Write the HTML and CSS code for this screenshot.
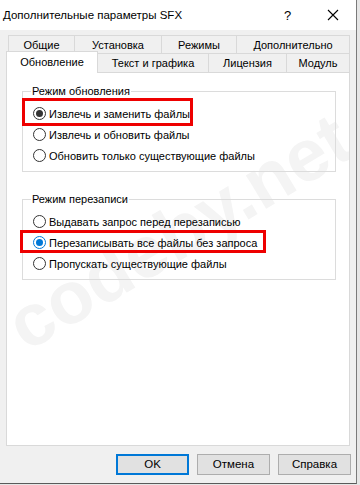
FILE: index.html
```html
<!DOCTYPE html>
<html lang="ru">

<head>
  <meta charset="UTF-8">
  <title>Дополнительные параметры SFX</title>
  <link rel="stylesheet" href="styles.css">
</head>

<body>
  <div class="window">
    <div class="titlebar">
      <span class="title">Дополнительные параметры SFX</span>
      <span class="help">?</span>
      <span class="close">
        <svg width="12" height="12" viewBox="0 0 12 12">
          <path d="M1 1 L11 11 M11 1 L1 11" stroke="#000" stroke-width="1.1" fill="none" />
        </svg>
      </span>
    </div>

    <div class="dialog">
      <div class="tabs">
        <div class="tab-row">
          <div class="tab tab-general">Общие</div>
          <div class="tab tab-install">Установка</div>
          <div class="tab tab-modes">Режимы</div>
          <div class="tab tab-extra">Дополнительно</div>
        </div>
        <div class="tab-row">
          <div class="tab tab-update active">Обновление</div>
          <div class="tab tab-text">Текст и графика</div>
          <div class="tab tab-license">Лицензия</div>
          <div class="tab tab-module">Модуль</div>
        </div>
      </div>

      <div class="panel">
        <div class="watermark">codeby.net</div>

        <fieldset class="group">
          <legend>Режим обновления</legend>
          <label class="option">
            <span class="radio checked"></span>Извлечь и заменить файлы
            <span class="mark mark-update"></span>
          </label>
          <label class="option"><span class="radio"></span>Извлечь и обновить файлы</label>
          <label class="option"><span class="radio"></span>Обновить только существующие файлы</label>
        </fieldset>

        <fieldset class="group group-overwrite">
          <legend>Режим перезаписи</legend>
          <label class="option"><span class="radio"></span>Выдавать запрос перед перезаписью</label>
          <label class="option">
            <span class="radio checked focused"></span>Перезаписывать все файлы без запроса
            <span class="mark mark-overwrite"></span>
          </label>
          <label class="option"><span class="radio"></span>Пропускать существующие файлы</label>
        </fieldset>
      </div>

      <div class="buttons">
        <button class="btn default">OK</button>
        <button class="btn">Отмена</button>
        <button class="btn">Справка</button>
      </div>
    </div>
  </div>
</body>

</html>
```

FILE: styles.css
```css
* {
  margin: 0;
  padding: 0;
  box-sizing: border-box;
}

body {
  font-family: "Liberation Sans", Arial, sans-serif;
  font-size: 11px;
  color: #000000;
  background: #e6e6e6;
}

.window {
  width: 357px;
  height: 484px;
  background: #f0f0f0;
  border-right: 1px solid #7a7a7a;
  border-bottom: 1px solid #5a5a5a;
}

.titlebar {
  height: 30px;
  background: #ffffff;
  display: flex;
  align-items: center;
  padding-left: 3px;
  font-size: 11.5px;
}

.title {
  flex: 1;
}

.help {
  width: 14px;
  font-size: 13px;
  margin-right: 29px;
}

.close {
  width: 12px;
  height: 12px;
  margin-right: 17px;
  display: flex;
}

.dialog {
  padding: 5px 6px 0 6px;
}

/* tabs */
.tab-row {
  display: flex;
  margin-left: 2px;
}

.tab {
  height: 18px;
  line-height: 19px;
  text-align: center;
  background: #f0f0f0;
  border-top: 1px solid #d9d9d9;
  border-right: 1px solid #d9d9d9;
  white-space: nowrap;
}

.tab:first-child {
  border-left: 1px solid #d9d9d9;
}

.tab-row + .tab-row .tab {
  height: 19px;
  line-height: 19px;
}

.tab-general { width: 67px; }
.tab-install { width: 87px; }
.tab-modes { width: 75px; }
.tab-extra { width: 113px; }
.tab-text { width: 111px; }
.tab-license { width: 78px; }
.tab-module { width: 63px; }

.tab-row + .tab-row .tab.active {
  width: 92px;
  height: 22px;
  margin: -2px 0 -1px -2px;
  line-height: 21px;
  background: #ffffff;
  position: relative;
  z-index: 2;
}

/* page */
.panel {
  height: 374px;
  background: #ffffff;
  border: 1px solid #d9d9d9;
  padding: 10px 13px 0 15px;
  position: relative;
  overflow: hidden;
}

.watermark {
  position: absolute;
  left: -28px;
  top: 122px;
  width: 400px;
  text-align: center;
  font-family: "Liberation Sans", sans-serif;
  font-weight: bold;
  font-size: 74px;
  line-height: 74px;
  color: #f4f4f4;
  transform: rotate(-31deg);
}

.group {
  border: 1px solid #dcdcdc;
  padding: 4px 8px 5px 8px;
  position: relative;
  z-index: 1;
}

.group legend {
  line-height: 16px;
  padding: 0 1px;
}

.group-overwrite {
  margin-top: 19px;
}

.option {
  display: flex;
  align-items: center;
  gap: 3px;
  height: 21px;
  padding-left: 2px;
  position: relative;
  white-space: nowrap;
}

.radio {
  width: 13px;
  height: 13px;
  border: 1px solid #333333;
  border-radius: 50%;
  background: #ffffff;
  display: flex;
  align-items: center;
  justify-content: center;
}

.radio.checked::after {
  content: "";
  width: 7px;
  height: 7px;
  border-radius: 50%;
  background: #333333;
}

.radio.focused {
  border-color: #0078d7;
}

.radio.focused::after {
  background: #0078d7;
}

/* red annotation frames */
.mark {
  position: absolute;
  border: 3px solid #ee0000;
}

.mark-update {
  left: -9px;
  top: -5px;
  width: 171px;
  height: 28px;
}

.mark-overwrite {
  left: -11px;
  top: -2px;
  width: 246px;
  height: 23px;
}

/* buttons */
.buttons {
  display: flex;
  justify-content: flex-end;
  gap: 8px;
  margin-top: 8px;
  margin-right: -1px;
}

.btn {
  all: unset;
  width: 73px;
  height: 21px;
  box-sizing: border-box;
  text-align: center;
  line-height: 19px;
  font-family: "Liberation Sans", Arial, sans-serif;
  font-size: 11.5px;
  background: #e1e1e1;
  border: 1px solid #adadad;
}

.btn.default {
  border: 2px solid #0078d7;
  line-height: 17px;
}
```
